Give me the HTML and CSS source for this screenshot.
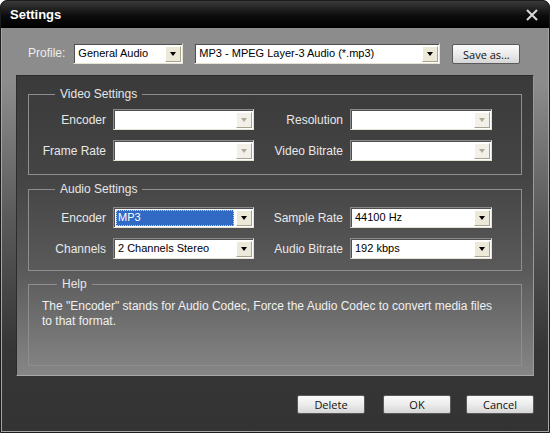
FILE: index.html
```html
<!DOCTYPE html>
<html lang="en">
<head>
    <meta charset="UTF-8">
    <title>Settings</title>
    <link rel="stylesheet" href="styles.css">
</head>
<body>
    <div class="window">
        <div class="titlebar">
            <span class="title">Settings</span>
            <svg class="close" width="12" height="12" viewBox="0 0 12 12">
                <path d="M1 1 L11 11 M11 1 L1 11" stroke="#d8d8d8" stroke-width="2" fill="none"/>
            </svg>
        </div>
        <div class="content">
            <div class="profile">
                <span class="profile-label">Profile:</span>
                <div class="combo profile-cat"><span class="value">General Audio</span><span class="drop"><i></i></span></div>
                <div class="combo profile-fmt"><span class="value">MP3 - MPEG Layer-3 Audio (*.mp3)</span><span class="drop"><i></i></span></div>
                <button class="btn save">Save as...</button>
            </div>

            <div class="panel">
                <fieldset class="group video">
                    <legend>Video Settings</legend>
                    <div class="rows">
                        <label>Encoder</label>
                        <div class="combo off"><span class="value"></span><span class="drop"><i></i></span></div>
                        <label>Resolution</label>
                        <div class="combo off"><span class="value"></span><span class="drop"><i></i></span></div>
                        <label>Frame Rate</label>
                        <div class="combo off"><span class="value"></span><span class="drop"><i></i></span></div>
                        <label>Video Bitrate</label>
                        <div class="combo off"><span class="value"></span><span class="drop"><i></i></span></div>
                    </div>
                </fieldset>

                <fieldset class="group audio">
                    <legend>Audio Settings</legend>
                    <div class="rows">
                        <label>Encoder</label>
                        <div class="combo focus"><span class="value"><b>MP3</b></span><span class="drop"><i></i></span></div>
                        <label>Sample Rate</label>
                        <div class="combo"><span class="value">44100 Hz</span><span class="drop"><i></i></span></div>
                        <label>Channels</label>
                        <div class="combo"><span class="value">2 Channels Stereo</span><span class="drop"><i></i></span></div>
                        <label>Audio Bitrate</label>
                        <div class="combo"><span class="value">192 kbps</span><span class="drop"><i></i></span></div>
                    </div>
                </fieldset>

                <fieldset class="group help">
                    <legend>Help</legend>
                    <p>The "Encoder" stands for Audio Codec, Force the Audio Codec to convert media files to that format.</p>
                </fieldset>
            </div>

            <div class="actions">
                <button class="btn delete">Delete</button>
                <button class="btn ok">OK</button>
                <button class="btn cancel">Cancel</button>
            </div>
        </div>
    </div>
</body>
</html>
```

FILE: styles.css
```css
body {
    margin: 0;
    background: #fff;
    font-family: "Liberation Sans", Arial, sans-serif;
    font-size: 12px;
}
.window {
    width: 550px;
    height: 433px;
    box-sizing: border-box;
    border: 1px solid #1c1c1c;
    border-radius: 7px 7px 0 0;
    overflow: hidden;
    display: flex;
    flex-direction: column;
    background: #000;
}
.titlebar {
    height: 27px;
    flex: none;
    display: flex;
    align-items: center;
    justify-content: space-between;
    padding: 0 11px 0 9px;
    background: linear-gradient(#3a3a3a, #0c0c0c 55%, #000);
}
.title {
    color: #fff;
    font-weight: bold;
    font-size: 13px;
}
.close {
    margin-top: 1px;
}
.content {
    flex: 1;
    display: flex;
    flex-direction: column;
    background: linear-gradient(#8c8c8c 0, #8c8c8c 55px, #5a5a5a 190px, #363636 320px, #333);
    box-shadow: inset 1px 0 #a6a6a6, inset -1px 0 #a6a6a6, inset 0 -1px #a6a6a6;
}

/* profile row */
.profile {
    height: 47px;
    box-sizing: border-box;
    display: flex;
    align-items: flex-start;
    padding: 15px 0 0 27px;
}
.profile-label {
    color: #ececec;
    line-height: 20px;
    margin-right: 8px;
}
.profile-cat {
    width: 110px;
    height: 20px;
    margin-right: 11px;
}
.profile-fmt {
    width: 246px;
    height: 20px;
    margin-right: 12px;
}

/* combo boxes */
.combo {
    height: 21px;
    box-sizing: border-box;
    display: flex;
    align-items: stretch;
    background: #fff;
    border: 1px solid;
    border-color: #8a8a8a #e6e2d4 #e6e2d4 #8a8a8a;
    box-shadow: inset 1px 1px #505050;
    padding: 2px 1px 1px 2px;
    font-family: "Liberation Sans", Tahoma, sans-serif;
    font-size: 11px;
    color: #000;
}
.combo .value {
    flex: 1;
    line-height: 15px;
    padding-left: 2px;
    white-space: nowrap;
    overflow: hidden;
}
.combo .drop {
    width: 16px;
    flex: none;
    box-sizing: border-box;
    background: #ece9d8;
    border: 1px solid;
    border-color: #fff #a7a390 #a7a390 #fff;
    display: flex;
    align-items: center;
    justify-content: center;
}
.combo .drop i {
    width: 0;
    height: 0;
    border-left: 3.5px solid transparent;
    border-right: 3.5px solid transparent;
    border-top: 4px solid #000;
}
.combo.off .drop {
    background: #f2f0e8;
}
.combo.off .drop i {
    border-top-color: #aeaa9a;
}
.combo.focus .value {
    padding-left: 0;
    margin-right: 2px;
    background: #316ac5;
    outline: 1px dotted #c8d4ea;
    outline-offset: -1px;
    color: #fff;
}
.combo.focus .value b {
    font-weight: normal;
    padding-left: 2px;
}

/* buttons */
.btn {
    height: 20px;
    box-sizing: border-box;
    padding: 0;
    border: 1px solid #5a5a5a;
    border-radius: 2px;
    background: linear-gradient(#fbfbfb, #ececec 50%, #d6d6d6);
    font-family: "Open Sans", sans-serif;
    font-size: 11px;
    color: #111;
    line-height: 17px;
}
.save {
    width: 68px;
    margin-top: 1px;
}

/* dark panel */
.panel {
    height: 301px;
    box-sizing: border-box;
    margin: 0 15px;
    display: flex;
    flex-direction: column;
    padding: 11px 11px 9px;
    border: 1px solid;
    border-color: #2c2c2c #9a9a9a #a8a8a8 #2c2c2c;
    background: linear-gradient(#3a3a3a, #454545 35%, #5a5a5a 65%, #868686);
}
.group {
    margin: 0;
    padding: 0;
    min-width: 0;
    border: 1px solid #8e8e8e;
}
.group legend {
    margin-left: 26px;
    padding: 0 5px;
    line-height: 14px;
    color: #e6e6e6;
    font-size: 12px;
}
.rows {
    display: grid;
    grid-template-columns: 84px 141px 96px 142px;
    row-gap: 10px;
    align-items: center;
}
.rows label {
    text-align: right;
    padding-right: 7px;
    color: #e8e8e8;
    white-space: nowrap;
}
.video .rows {
    padding: 8px 0 13px;
}
.audio {
    margin-top: 7px;
}
.audio .rows {
    padding: 11px 0 11px;
}
.help {
    margin-top: 6px;
    flex: 1;
}
.help legend {
    margin-left: 28px;
}
.help p {
    margin: 0;
    padding: 8px 24px 0 13px;
    line-height: 15px;
    color: #f0f0f0;
}

/* bottom buttons */
.actions {
    flex: 1;
    display: flex;
    align-items: flex-start;
    justify-content: flex-end;
    padding: 19px 15px 0 0;
}
.actions .btn {
    width: 68px;
    height: 19px;
    line-height: 16px;
}
.delete {
    margin-right: 18px;
}
.ok {
    margin-right: 15px;
}
```
